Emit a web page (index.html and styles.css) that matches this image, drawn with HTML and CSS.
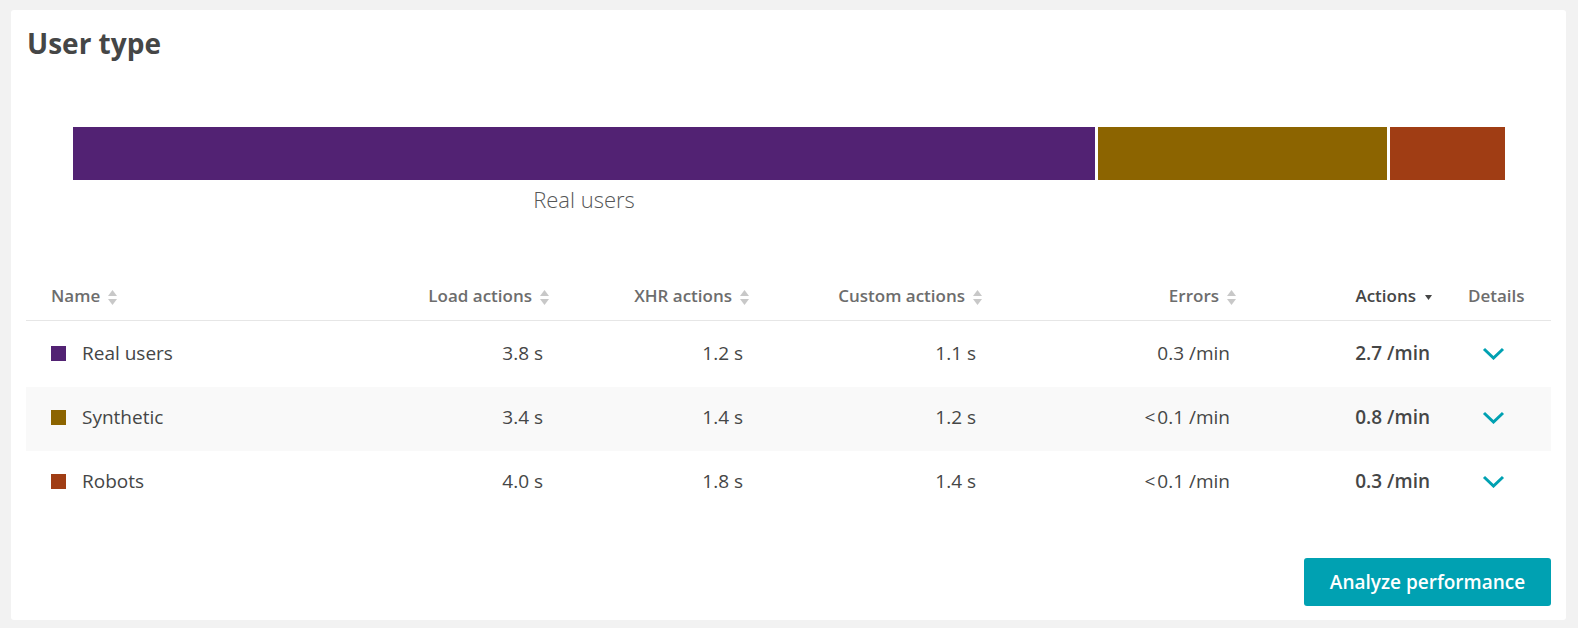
FILE: index.html
```html
<!DOCTYPE html>
<html>
<head>
<meta charset="utf-8">
<link rel="stylesheet" href="styles.css">
</head>
<body>
<div class="card">
  <h1 class="title">User type</h1>
  <div class="bar">
    <div class="seg seg-real" style="flex: 1022"></div>
    <div class="seg seg-synth" style="flex: 289"></div>
    <div class="seg seg-robot" style="flex: 115"></div>
  </div>
  <div class="bar-labels">
    <div class="bar-label" style="flex: 1022">Real users</div>
    <div class="bar-label" style="flex: 289"></div>
    <div class="bar-label" style="flex: 115"></div>
  </div>

  <div class="table">
    <div class="row head">
      <div class="cell name">Name<svg class="sort" width="9" height="15" viewBox="0 0 9 15"><polygon points="0,6 4.5,0 9,6"/><polygon points="0,9 9,9 4.5,15"/></svg></div>
      <div class="cell num">Load actions<svg class="sort" width="9" height="15" viewBox="0 0 9 15"><polygon points="0,6 4.5,0 9,6"/><polygon points="0,9 9,9 4.5,15"/></svg></div>
      <div class="cell num">XHR actions<svg class="sort" width="9" height="15" viewBox="0 0 9 15"><polygon points="0,6 4.5,0 9,6"/><polygon points="0,9 9,9 4.5,15"/></svg></div>
      <div class="cell num">Custom actions<svg class="sort" width="9" height="15" viewBox="0 0 9 15"><polygon points="0,6 4.5,0 9,6"/><polygon points="0,9 9,9 4.5,15"/></svg></div>
      <div class="cell num">Errors<svg class="sort" width="9" height="15" viewBox="0 0 9 15"><polygon points="0,6 4.5,0 9,6"/><polygon points="0,9 9,9 4.5,15"/></svg></div>
      <div class="cell num sorted">Actions<svg class="sort-down" width="7" height="5" viewBox="0 0 7 5"><polygon points="0,0 7,0 3.5,5"/></svg></div>
      <div class="cell details">Details</div>
    </div>
    <div class="body">
      <div class="row">
        <div class="cell name"><span class="swatch sw-real"></span>Real users</div>
        <div class="cell val">3.8 s</div>
        <div class="cell val">1.2 s</div>
        <div class="cell val">1.1 s</div>
        <div class="cell val">0.3 /min</div>
        <div class="cell val strong">2.7 /min</div>
        <div class="cell details"><svg class="chev" width="23" height="13" viewBox="0 0 23 13"><polyline points="2,2 11.5,11 21,2"/></svg></div>
      </div>
      <div class="row alt">
        <div class="cell name"><span class="swatch sw-synth"></span>Synthetic</div>
        <div class="cell val">3.4 s</div>
        <div class="cell val">1.4 s</div>
        <div class="cell val">1.2 s</div>
        <div class="cell val">&lt;&#8202;0.1 /min</div>
        <div class="cell val strong">0.8 /min</div>
        <div class="cell details"><svg class="chev" width="23" height="13" viewBox="0 0 23 13"><polyline points="2,2 11.5,11 21,2"/></svg></div>
      </div>
      <div class="row">
        <div class="cell name"><span class="swatch sw-robot"></span>Robots</div>
        <div class="cell val">4.0 s</div>
        <div class="cell val">1.8 s</div>
        <div class="cell val">1.4 s</div>
        <div class="cell val">&lt;&#8202;0.1 /min</div>
        <div class="cell val strong">0.3 /min</div>
        <div class="cell details"><svg class="chev" width="23" height="13" viewBox="0 0 23 13"><polyline points="2,2 11.5,11 21,2"/></svg></div>
      </div>
    </div>
  </div>

  <div class="actions">
    <button class="btn">Analyze performance</button>
  </div>
</div>
</body>
</html>
```
FILE: styles.css
```css
* { box-sizing: border-box; }
html, body { margin: 0; }
body {
  background: #f2f2f2;
  padding: 10px 12px 8px 11px;
  font-family: "Open Sans", "Noto Sans", sans-serif;
  color: #454646;
}
.card {
  background: #fff;
  border-radius: 3px;
  padding: 15px 15px 14px 15px;
  height: 610px;
}
.title {
  margin: 0 0 0 1px;
  font-size: 28px;
  line-height: 36px;
  font-weight: 700;
  color: #454646;
}
.bar {
  display: flex;
  gap: 3px;
  margin: 66px 46px 0 47px;
  height: 53px;
}
.seg { min-width: 0; }
.seg-real { background: #522273; }
.seg-synth { background: #8c6400; }
.seg-robot { background: #a03d14; }
.bar-labels {
  display: flex;
  gap: 3px;
  margin: 6px 46px 0 47px;
  height: 26px;
}
.bar-label {
  min-width: 0;
  text-align: center;
  font-size: 22px;
  line-height: 26px;
  font-weight: 300;
  color: #555656;
}
.table { margin-top: 60px; }
.row {
  display: grid;
  grid-template-columns: 340px 183px 200px 233px 254px 196px 119px;
  height: 64px;
  align-items: center;
  padding-bottom: 4px;
  font-size: 19px;
  line-height: 24px;
}
.row.head {
  height: 49px;
  padding-bottom: 0;
  border-bottom: 1px solid #e6e6e6;
  font-size: 17px;
  line-height: 20px;
  font-weight: 600;
  color: #6d6d6d;
}
.body { padding-top: 2px; }
.row.alt { background: #f9f9f9; }
.cell { display: flex; align-items: center; white-space: nowrap; }
.cell.name { padding-left: 25px; }
.cell.num { justify-content: flex-end; }
.cell.sorted { color: #454646; }
.cell.val { justify-content: flex-end; padding-right: 6px; }
.cell.val.strong { font-weight: 600; padding-right: 2px; }
.cell.details { padding-left: 36px; }
.row:not(.head) .cell.details { padding-left: 50px; }
.sort { margin-left: 8px; fill: #c8c8c8; margin-top: 2px; }
.sort-down { margin-left: 9px; fill: #454646; margin-top: 2px; }
.swatch {
  width: 15px;
  height: 15px;
  margin-right: 16px;
  flex: none;
}
.sw-real { background: #522273; }
.sw-synth { background: #8c6400; }
.sw-robot { background: #a03d14; }
.chev { fill: none; stroke: #00a1b2; stroke-width: 3; }
.actions {
  display: flex;
  justify-content: flex-end;
  margin-top: 43px;
}
.btn {
  width: 247px;
  height: 48px;
  border: 0;
  border-radius: 3px;
  background: #00a1b2;
  color: #fff;
  font-family: "Open Sans", "Noto Sans", sans-serif;
  font-size: 19px;
  font-weight: 600;
  padding: 0;
}
```
